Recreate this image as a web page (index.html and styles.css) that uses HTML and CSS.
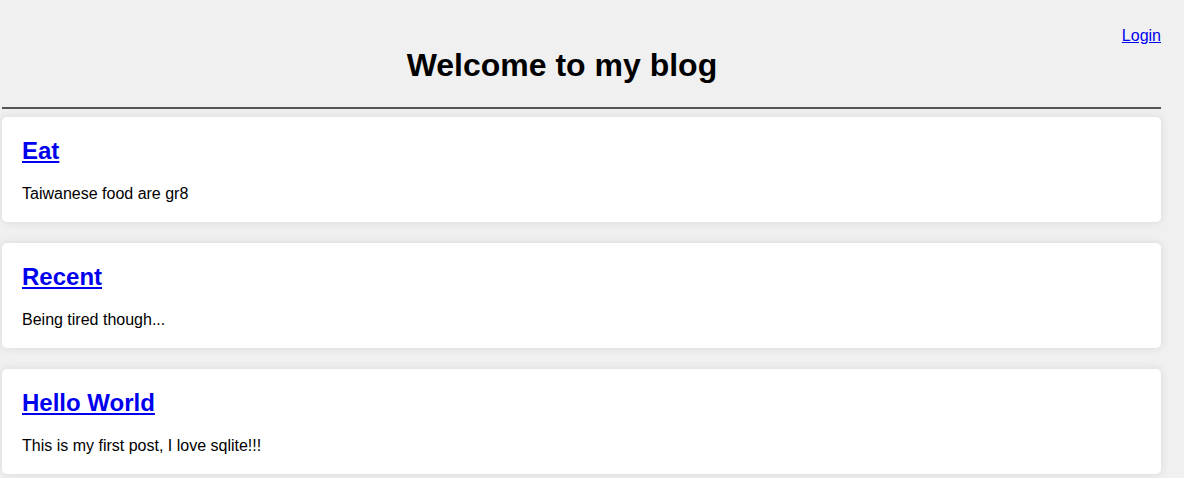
FILE: index.html
```html
<!DOCTYPE html>
<html>
<head>
<meta charset="utf-8">
<title>Blog</title>
<link rel="stylesheet" href="styles.css">
</head>
<body>
<div class="page">
  <header class="header">
    <h1 class="title">Welcome to my blog</h1>
    <a class="login" href="#">Login</a>
  </header>
  <hr class="rule">
  <main class="posts">
    <article class="card">
      <h2 class="card-title"><a href="#">Eat</a></h2>
      <p class="card-text">Taiwanese food are gr8</p>
    </article>
    <article class="card">
      <h2 class="card-title"><a href="#">Recent</a></h2>
      <p class="card-text">Being tired though...</p>
    </article>
    <article class="card">
      <h2 class="card-title"><a href="#">Hello World</a></h2>
      <p class="card-text">This is my first post, I love sqlite!!!</p>
    </article>
  </main>
</div>
</body>
</html>
```
FILE: styles.css
```css
html, body {
  margin: 0;
  padding: 0;
  background: #f0f0f0;
  font-family: "Liberation Sans", Arial, sans-serif;
  color: #000;
}
.page {
  padding: 0 23px 20px 2px;
}
.header {
  display: flex;
  align-items: flex-start;
  padding-top: 27px;
}
.title {
  flex: 1;
  text-align: center;
  font-size: 32px;
  line-height: 37px;
  font-weight: bold;
  margin: 20px 0 23px;
}
.login {
  font-size: 16px;
  line-height: 18px;
  color: #0000ee;
}
.rule {
  margin: 0 0 8px;
  border: none;
  border-top: 2px solid #555;
  height: 0;
}
.posts {
  display: flex;
  flex-direction: column;
  gap: 21px;
}
.card {
  background: #fff;
  border-radius: 5px;
  box-shadow: 0 0 10px rgba(0, 0, 0, 0.1);
  padding: 20px 20px 19px;
}
.card-title {
  margin: 0 0 20px;
  font-size: 24px;
  line-height: 28px;
  font-weight: bold;
}
.card-title a {
  color: #0000ee;
}
.card-text {
  margin: 0;
  font-size: 16px;
  line-height: 18px;
}
```
